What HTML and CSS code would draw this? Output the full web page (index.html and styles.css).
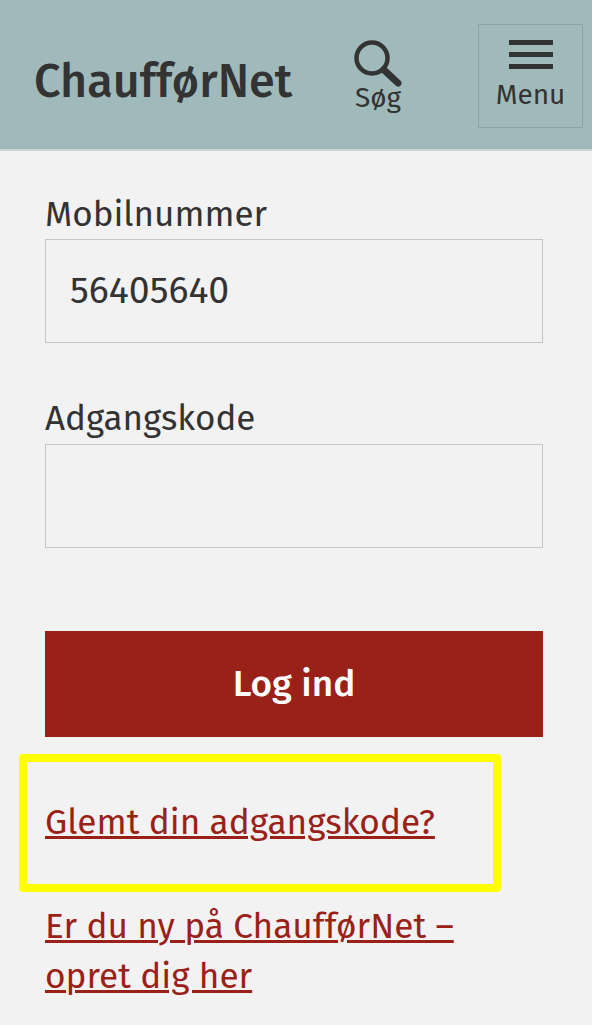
FILE: index.html
```html
<!DOCTYPE html>
<html lang="da">
<head>
<meta charset="utf-8">
<title>ChaufførNet</title>
<link rel="stylesheet" href="styles.css">
</head>
<body>
<header class="top">
  <div class="brand">ChaufførNet</div>
  <div class="search">
    <svg class="search-icon" viewBox="0 0 50 50" width="50" height="50"><circle cx="19" cy="20" r="15.5" fill="none" stroke="#333" stroke-width="4.5"/><path d="M31 32 L45 45" stroke="#333" stroke-width="7" stroke-linecap="round"/></svg>
    <span>Søg</span>
  </div>
  <div class="menu">
    <div class="bars"><i></i><i></i><i></i></div>
    <span>Menu</span>
  </div>
</header>
<main class="form">
  <label class="label">Mobilnummer</label>
  <div class="field">56405640</div>
  <label class="label second">Adgangskode</label>
  <div class="field"></div>
  <button class="login">Log ind</button>
  <div class="hl"><a href="#">Glemt din adgangskode?</a></div>
  <p class="new"><a href="#">Er du ny på ChaufførNet –<br>opret dig her</a></p>
</main>
</body>
</html>
```
FILE: styles.css
```css
* { box-sizing: border-box; }
html, body { margin: 0; height: 100%; }
body { background: #f2f2f2; color: #333; font-family: "Fira Sans", "Open Sans", "Noto Sans", sans-serif; overflow: hidden; }
.top { height: 151px; background: #a0babb; display: flex; align-items: flex-start; padding: 0 9px 0 34px; border-bottom: 2px solid #c9d3d3; }
.brand { font-size: 46.8px; font-weight: 500; flex: 1; margin-top: 53px; line-height: 56px; }
.search { width: 50px; display: flex; flex-direction: column; align-items: center; margin: 38px 75px 0 0; font-size: 28px; line-height: 30px; }
.search-icon { display: block; margin-bottom: -5px; }
.menu { width: 105px; height: 104px; margin-top: 24px; padding-top: 15px; border: 1px solid #8aa3a4; display: flex; flex-direction: column; align-items: center; font-size: 28px; gap: 9px; }
.bars { width: 44px; display: flex; flex-direction: column; gap: 7px; }
.bars i { display: block; height: 5px; background: #333; }
.form { padding: 41px 49px 0 45px; }
.label { display: block; font-size: 35px; line-height: 44px; }
.second { margin-top: 53px; }
.field { height: 104px; margin-top: 3px; border: 1px solid #c4c4c4; padding: 0 24px; font-size: 37.5px; line-height: 101px; }
.second + .field { margin-top: 4px; }
.login { display: block; width: 100%; height: 106px; margin-top: 83px; padding-bottom: 3px; background: #9a2117; color: #fff; border: 0; font: 500 37px "Fira Sans", "Open Sans", sans-serif; }
.hl { margin: 17px 0 0 -26px; width: 482px; height: 138px; border: 8px solid #ff0; border-radius: 4px; padding: 0 18px 3px; display: flex; align-items: center; font-size: 35.2px; }
a { color: #9a2117; text-decoration-thickness: 2.5px; }
.new { margin: 9px 0 0; font-size: 35.2px; line-height: 50px; }
```
